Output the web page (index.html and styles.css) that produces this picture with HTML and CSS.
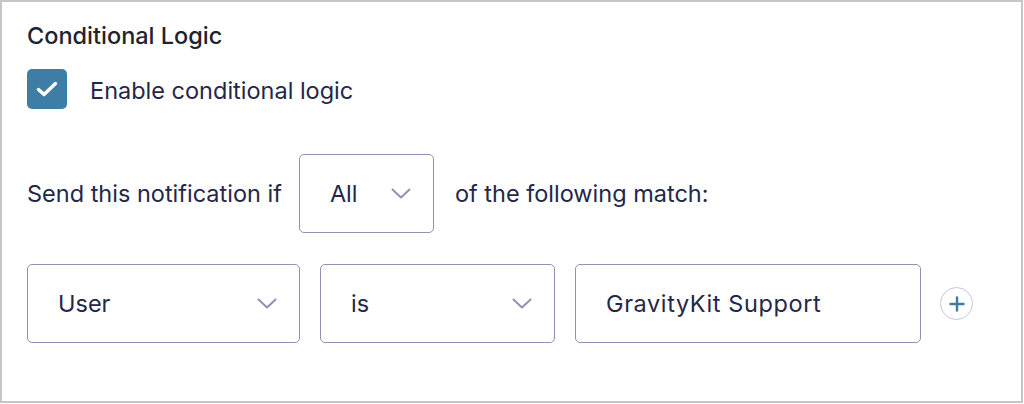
FILE: index.html
```html
<!DOCTYPE html>
<html lang="en">
<head>
<meta charset="utf-8">
<title>Conditional Logic</title>
<link rel="stylesheet" href="styles.css">
</head>
<body>
<div class="panel">
  <h2 class="title">Conditional Logic</h2>
  <label class="check-row">
    <span class="checkbox">
      <svg width="22" height="18" viewBox="0 0 22 18" aria-hidden="true"><path d="M2.5 9.5 L8 14.5 L19.5 3.5" fill="none" stroke="#fff" stroke-width="3.4" stroke-linecap="round" stroke-linejoin="round"/></svg>
    </span>
    <span class="check-label">Enable conditional logic</span>
  </label>
  <div class="send-row">
    <span class="text">Send this notification if</span>
    <div class="select select-all">
      <span class="value">All</span>
      <svg class="chev" width="20" height="11" viewBox="0 0 20 11" aria-hidden="true"><path d="M1.5 1.5 L10 9.5 L18.5 1.5" fill="none" stroke="#9092b2" stroke-width="2" stroke-linecap="round" stroke-linejoin="round"/></svg>
    </div>
    <span class="text text-after">of the following match:</span>
  </div>
  <div class="rule-row">
    <div class="select select-field">
      <span class="value">User</span>
      <svg class="chev" width="20" height="11" viewBox="0 0 20 11" aria-hidden="true"><path d="M1.5 1.5 L10 9.5 L18.5 1.5" fill="none" stroke="#9092b2" stroke-width="2" stroke-linecap="round" stroke-linejoin="round"/></svg>
    </div>
    <div class="select select-op">
      <span class="value">is</span>
      <svg class="chev" width="20" height="11" viewBox="0 0 20 11" aria-hidden="true"><path d="M1.5 1.5 L10 9.5 L18.5 1.5" fill="none" stroke="#9092b2" stroke-width="2" stroke-linecap="round" stroke-linejoin="round"/></svg>
    </div>
    <div class="select select-value">
      <span class="value">GravityKit Support</span>
    </div>
    <button class="add-btn" type="button" aria-label="Add rule">
      <svg width="16" height="16" viewBox="0 0 16 16" aria-hidden="true"><path d="M8 1.5 V14.5 M1.5 8 H14.5" fill="none" stroke="#3e7da6" stroke-width="2.4" stroke-linecap="round"/></svg>
    </button>
  </div>
</div>
</body>
</html>
```

FILE: styles.css
```css
* { box-sizing: border-box; }
html, body { margin: 0; padding: 0; background: #fff; }
body {
  font-family: Inter, "Noto Sans", "Liberation Sans", sans-serif;
  color: #242748;
}
.panel {
  width: 1023px;
  height: 403px;
  border: 2px solid #c6c6c6;
  padding: 20px 0 0 25px;
}
.title {
  margin: 0;
  font-size: 23.5px;
  line-height: 28px;
  font-weight: 500;
  color: #1f2330;
}
.check-row {
  margin-top: 19px;
  height: 40px;
  display: flex;
  align-items: center;
  gap: 23px;
}
.checkbox {
  width: 40px;
  height: 40px;
  border-radius: 5px;
  background: #3e7da6;
  display: flex;
  align-items: center;
  justify-content: center;
}
.check-label, .text, .value {
  font-size: 23.5px;
  line-height: 30px;
}
.check-label { padding-top: 3px; }
.send-row {
  margin-top: 45px;
  display: flex;
  align-items: center;
  gap: 17px;
}
.text-after { margin-left: 4px; }
.select {
  height: 79px;
  border: 1.5px solid #9092b2;
  border-radius: 5px;
  display: flex;
  align-items: center;
  justify-content: space-between;
  padding: 0 22px 0 30px;
  background: #fff;
}
.select-all { width: 135px; }
.rule-row {
  margin-top: 31px;
  display: flex;
  align-items: center;
  gap: 20px;
}
.select-field { width: 273px; }
.select-op { width: 235px; }
.select-value { width: 346px; }
.select-value .value { letter-spacing: 0.6px; }
.add-btn {
  width: 33px;
  height: 33px;
  border-radius: 50%;
  border: 1.5px solid #c5c7da;
  background: #fff;
  padding: 0;
  margin-left: -1px;
  display: flex;
  align-items: center;
  justify-content: center;
}
```
